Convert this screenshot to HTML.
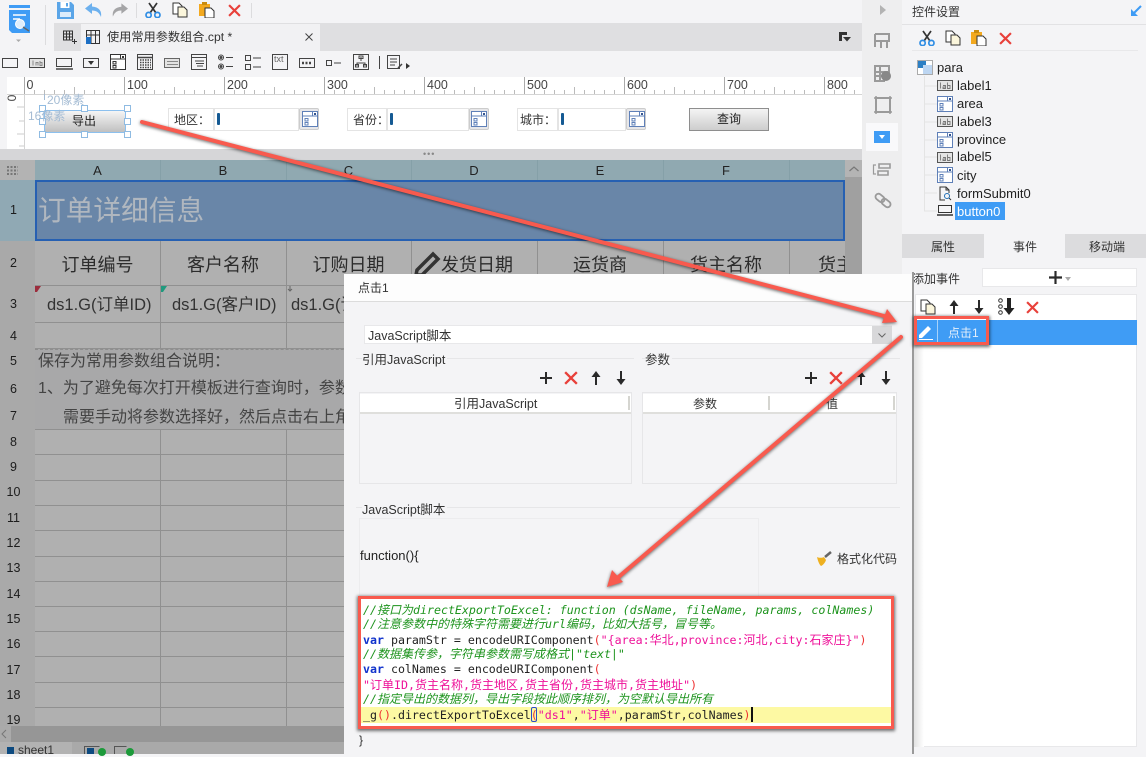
<!DOCTYPE html>
<html><head><meta charset="utf-8"><style>
html,body{margin:0;padding:0}
body{width:1146px;height:754px;position:relative;overflow:hidden;background:#f4f4f6;font-family:"Liberation Sans","Noto Sans CJK SC",sans-serif;color:#333}
.a{position:absolute}
.t{position:absolute;white-space:nowrap;line-height:1}
.h{background:#a9a9a9}
svg{position:absolute;overflow:visible}
.hl{position:absolute;left:35px;width:810px;height:1px;background:#909090}
.vl{position:absolute;top:241px;width:1px;height:485px;background:#909090}
.ch{position:absolute;top:160px;height:19px;line-height:21px;text-align:center;font-size:13px;color:#222}
.rh{position:absolute;left:0;width:27px;text-align:center;font-size:12.5px;color:#1c1c1c;line-height:1}
.r2{position:absolute;top:256px;font-size:18px;text-align:center;color:#2c2c2c;line-height:1;white-space:nowrap}
.sq{position:absolute;width:5px;height:5px;background:#fff;border:1px solid #8fbbe2}
.lb{position:absolute;background:#fff;border:1px solid #e4e4e4;font-size:12px;line-height:22px;color:#333;box-sizing:border-box;padding-left:5px;white-space:nowrap}
.in{position:absolute;background:#fff;border:1px solid #e4e4e4;box-sizing:border-box}
.in i{position:absolute;left:2px;top:4px;width:3px;height:12px;background:#155a93;border-radius:1px}
.cb{position:absolute;width:20px;height:22px;background:#e7e7e9;border:1px solid #ccc;border-radius:2px;box-sizing:border-box}
.tr{position:absolute;left:957px;font-size:13px;color:#222;line-height:1;white-space:nowrap}
.code{position:absolute;left:363px;font:11.62px/1 "DejaVu Sans Mono","Liberation Mono","Noto Sans CJK SC",monospace;white-space:pre;color:#222}
.code b{font-weight:inherit;font-size:12px}
.g{color:#1e941e;font-style:italic}.p{color:#ee1199}.k{color:#1133cc;font-weight:bold}.r{color:#ee3333}
.rl{position:absolute;top:79px;font-size:12.500px;color:#444;line-height:1}
.s16{position:absolute;white-space:nowrap;line-height:1;font-size:16px;color:#444}
</style></head><body>
<svg width="0" height="0" style="position:absolute"><defs>
<symbol id="cut" viewBox="0 0 16 16"><path d="M4 1l7 10M12 1L5 11" stroke="#333" stroke-width="1.700" fill="none"/><circle cx="3.600" cy="13" r="2.600" fill="none" stroke="#2f8de4" stroke-width="1.700"/><circle cx="12.400" cy="13" r="2.600" fill="none" stroke="#2f8de4" stroke-width="1.700"/></symbol>
<symbol id="copy" viewBox="0 0 16 16"><path d="M1 1h6l3 3v8H1z" fill="#fff" stroke="#333"/><path d="M6 5h6l3 3v7H6z" fill="#fbf6dc" stroke="#333"/></symbol>
<symbol id="paste" viewBox="0 0 16 16"><rect x="0" y="2" width="11" height="12" fill="#f3a91f"/><rect x="3" y="0" width="5" height="3" fill="#c98c10"/><path d="M6 6h6l3 3v7H6z" fill="#fff" stroke="#333"/></symbol>
<symbol id="x" viewBox="0 0 12 12"><path d="M1 1l10 10M11 1L1 11" stroke="#e8403a" stroke-width="2"/></symbol>
<symbol id="plus" viewBox="0 0 12 12"><path d="M6 0v12M0 6h12" stroke="#2a2a2a" stroke-width="2"/></symbol>
<symbol id="up" viewBox="0 0 10 14"><path d="M5 14V3" stroke="#2a2a2a" stroke-width="2"/><path d="M5 0l4.500 6h-9z" fill="#2a2a2a"/></symbol>
<symbol id="down" viewBox="0 0 10 14"><path d="M5 0v11" stroke="#2a2a2a" stroke-width="2"/><path d="M5 14l4.500-6h-9z" fill="#2a2a2a"/></symbol>
<symbol id="lab" viewBox="0 0 16 11"><rect x=".5" y=".5" width="15" height="10" fill="#e4e4e4" stroke="#555"/><path d="M3.500 2.500v6M6 5.500h2.500v3H6v-1.500h2.500M10.500 2.500v6h2.500v-3h-2.500" stroke="#777" fill="none" stroke-width=".9"/></symbol>
<symbol id="combo" viewBox="0 0 16 16"><rect x=".5" y=".5" width="15" height="15" fill="#fff" stroke="#5f80b8"/><path d="M1 5h14M10.500 1v4" stroke="#5f80b8"/><rect x="12" y="2" width="2" height="2" fill="#35558f"/><rect x="3" y="7.500" width="3" height="2.500" fill="none" stroke="#5f80b8"/><rect x="3" y="11.500" width="3" height="2.500" fill="none" stroke="#5f80b8"/></symbol>
<symbol id="cbk" viewBox="0 0 16 16"><rect x=".5" y=".5" width="15" height="15" fill="#fff" stroke="#333"/><path d="M1 5h14M10.500 1v4" stroke="#333"/><rect x="12" y="2" width="2" height="2" fill="#333"/><rect x="3" y="7.500" width="3" height="2.500" fill="none" stroke="#333"/><rect x="3" y="11.500" width="3" height="2.500" fill="none" stroke="#333"/></symbol>
</defs></svg>

<!-- top toolbar -->
<svg style="left:9px;top:5px" width="22" height="36" viewBox="0 0 22 36"><rect width="21" height="3" fill="#3f9cf5"/><path d="M0 5h21v23H3l-3-3z" fill="#3f9cf5"/><path d="M4 10h13M4 14h7" stroke="#fff" stroke-width="1.500"/><circle cx="11" cy="19" r="4.500" fill="#dfeefc" stroke="#fff"/><path d="M14 22l6 4" stroke="#666" stroke-width="1.500"/><path d="M7 34.500h5l-2.500 2.500z" fill="#aaa"/></svg>
<div class="a" style="left:45px;top:5px;width:1px;height:40px;background:#dcdcde"></div>
<svg style="left:57px;top:2px" width="17" height="17" viewBox="0 0 17 17"><path d="M0 0h14l3 3v14H0z" fill="#5aa5e8"/><rect x="3.500" y="0" width="9" height="6" fill="#fff"/><rect x="9" y="1" width="2" height="3.500" fill="#5aa5e8"/><rect x="3" y="10" width="11" height="5" fill="#dcecfb"/></svg>
<svg style="left:85px;top:3px" width="18" height="15" viewBox="0 0 18 15"><path d="M7 0L0 5.500 7 11V7.500c4 0 7 1.500 9 6.500 1-6-2-10-9-10.500z" fill="#6cb0ee"/></svg>
<svg style="left:111px;top:3px" width="17" height="15" viewBox="0 0 18 15"><path d="M11 0l7 5.500L11 11V7.500c-4 0-7 1.500-9 6.500C1 8 4 4 11 3.500z" fill="#a5a5a7"/></svg>
<div class="a" style="left:136px;top:3px;width:1px;height:15px;background:#dcdcde"></div>
<svg style="left:145px;top:2px" width="16" height="16"><use href="#cut"/></svg>
<svg style="left:172px;top:2px" width="16" height="16"><use href="#copy"/></svg>
<svg style="left:199px;top:2px" width="16" height="16"><use href="#paste"/></svg>
<svg style="left:228px;top:4px" width="13" height="13"><use href="#x"/></svg>
<div class="a" style="left:251px;top:3px;width:1px;height:15px;background:#dcdcde"></div>

<!-- tab bar -->
<div class="a" style="left:54px;top:23px;width:808px;height:28px;background:#dfdfe1"></div>
<div class="a" style="left:81px;top:24px;width:239px;height:27px;background:#f1f1f3"></div>
<svg style="left:63px;top:30px" width="14" height="14" viewBox="0 0 14 14"><path d="M.5 1h9v9h-9zM3.500 1v9M6.500 1v9M.5 4h9M.5 7h9M11.500 9v5M9 11.500h5" fill="none" stroke="#333" stroke-width="1"/></svg>
<svg style="left:86px;top:30px" width="14" height="14" viewBox="0 0 14 14"><path d="M.5.500h13v13H.5zM.5 5h13M5 .5v13M9.500.5v13" fill="none" stroke="#333"/><rect x="0" y="7" width="5" height="7" fill="#1c6fc4"/></svg>
<div class="t" style="left:107px;top:31px;font-size:12.200px;color:#333">使用常用参数组合.cpt *</div>
<svg style="left:305px;top:33px" width="8" height="8"><path d="M.5.500l7 7M7.500.500l-7 7" stroke="#444"/></svg>
<svg style="left:839px;top:32px" width="12" height="10"><path d="M0 0h8v3H3v6H0z" fill="#333"/><path d="M4 5h8L8 9.500z" fill="#333"/></svg>

<!-- widget toolbar -->
<svg style="left:0;top:51px" width="420" height="26" viewBox="0 0 420 26" fill="none" stroke="#444">
<rect x="2.500" y="7.500" width="15" height="9"/>
<rect x="29.500" y="7.500" width="15" height="9" fill="#e3e3e3"/><path d="M33 9.500v5M36 14.500v-3h2v3M40 10v4.500h2v-3h-2" stroke="#888"/>
<rect x="56.500" y="7.500" width="15" height="8"/><path d="M56 18h17" stroke-width="1.500"/>
<rect x="83.500" y="7.500" width="15" height="9"/><path d="M88 10h6l-3 4z" fill="#333" stroke="none"/>
<rect x="137.500" y="3.500" width="15" height="15"/><path d="M138 6.500h15" stroke-width="1.500"/><path d="M140 9h11M140 11.500h11M140 14h11M140 16.500h11" stroke-dasharray="1.500 1" stroke-width="1.500"/>
<rect x="164.500" y="7.500" width="15" height="9" fill="#e3e3e3" stroke="#666"/><path d="M167 10.500h11M167 13.500h11" stroke="#888"/>
<rect x="191.500" y="3.500" width="15" height="15"/><path d="M192 6.500h15M195 10h9M196 12.500h8M197 15h6"/>
<circle cx="221" cy="6.500" r="2.500"/><circle cx="221" cy="15.500" r="2.500"/><circle cx="221" cy="6.500" r="1" fill="#444"/><circle cx="221" cy="15.500" r="1" fill="#444"/><path d="M226 6.500h7M226 15.500h7"/>
<rect x="245.500" y="4.500" width="5" height="5"/><rect x="245.500" y="13.500" width="5" height="5"/><path d="M253 7h8M253 16h8"/>
<rect x="272.500" y="3.500" width="15" height="15"/>
<rect x="299.500" y="7.500" width="15" height="9"/><path d="M302 12h10" stroke-dasharray="2 1.500" stroke-width="2.500"/>
<rect x="326.500" y="9.500" width="5" height="5"/><path d="M334 12h7"/>
<rect x="353.500" y="3.500" width="15" height="15"/><path d="M361 6v4M357 15v-3h8v3"/><rect x="359" y="5" width="4" height="2.500"/><rect x="355.500" y="13.500" width="3" height="2.500"/><rect x="363.500" y="13.500" width="3" height="2.500"/>
<path d="M379.500 5v13"/>
<rect x="387.500" y="4.500" width="12" height="13"/><path d="M390 8h7M390 11h7M390 14h5"/><path d="M398 17l4-4" stroke-width="1.500"/>
<path d="M406 12l4 3-4 3z" fill="#333" stroke="none"/>
</svg>
<svg style="left:110px;top:54px" width="16" height="16"><use href="#cbk"/></svg>
<div class="t" style="left:274px;top:55px;font-size:9px;color:#666">txt</div>

<!-- ruler -->
<div class="a" style="left:0;top:77px;width:862px;height:17px;background:#fff;border-bottom:1px solid #d4d4d4;box-sizing:content-box"></div>
<div class="a" style="left:0;top:77px;width:7px;height:73px;background:#f4f4f6"></div>
<svg style="left:24px;top:77px" width="838" height="18" viewBox="0 0 838 18" fill="none" stroke="#bbb">
<path d="M.5 0v17M100.500 0v17M200.500 0v17M300.500 0v17M400.500 0v17M500.500 0v17M600.500 0v17M700.500 0v17M800.500 0v17" stroke="#aaa"/>
<path d="M50.500 10v7M150.500 10v7M250.500 10v7M350.500 10v7M450.500 10v7M550.500 10v7M650.500 10v7M750.500 10v7"/>
<path d="M10.500 13v4M20.500 13v4M30.500 13v4M40.500 13v4M60.500 13v4M70.500 13v4M80.500 13v4M90.500 13v4M110.500 13v4M120.500 13v4M130.500 13v4M140.500 13v4M160.500 13v4M170.500 13v4M180.500 13v4M190.500 13v4M210.500 13v4M220.500 13v4M230.500 13v4M240.500 13v4M260.500 13v4M270.500 13v4M280.500 13v4M290.500 13v4M310.500 13v4M320.500 13v4M330.500 13v4M340.500 13v4M360.500 13v4M370.500 13v4M380.500 13v4M390.500 13v4M410.500 13v4M420.500 13v4M430.500 13v4M440.500 13v4M460.500 13v4M470.500 13v4M480.500 13v4M490.500 13v4M510.500 13v4M520.500 13v4M530.500 13v4M540.500 13v4M560.500 13v4M570.500 13v4M580.500 13v4M590.500 13v4M610.500 13v4M620.500 13v4M630.500 13v4M640.500 13v4M660.500 13v4M670.500 13v4M680.500 13v4M690.500 13v4M710.500 13v4M720.500 13v4M730.500 13v4M740.500 13v4M760.500 13v4M770.500 13v4M780.500 13v4M790.500 13v4M810.500 13v4M820.500 13v4M830.500 13v4"/>
</svg>
<div class="rl" style="left:26.500px">0</div><div class="rl" style="left:127px">100</div><div class="rl" style="left:227px">200</div><div class="rl" style="left:327px">300</div><div class="rl" style="left:427px">400</div><div class="rl" style="left:527px">500</div><div class="rl" style="left:627px">600</div><div class="rl" style="left:727px">700</div><div class="rl" style="left:827px">800</div>

<!-- param area -->
<div class="a" style="left:7px;top:95px;width:855px;height:54px;background:#fff"></div>
<div class="a" style="left:24px;top:94px;width:1px;height:55px;background:#d4d4d4"></div>
<svg style="left:7px;top:94px" width="17" height="55" fill="none" stroke="#ccc"><path d="M10 13h7M12 27h5M10 40h7M12 52h5"/></svg>
<div class="t" style="left:6px;top:92px;font-size:12px;color:#444;transform:rotate(-90deg);width:12px;text-align:center">0</div>
<div class="a" style="left:0;top:149px;width:862px;height:11px;background:#d6d6d8"></div>
<div class="t" style="left:423px;top:150px;font-size:9px;color:#888;letter-spacing:1px">•••</div>

<div class="a" style="left:44px;top:110px;width:80px;height:21px;background:linear-gradient(#f5f5f5,#c0c0c0);border:1px solid #8cc0ee"></div>
<div class="t" style="left:72px;top:115px;font-size:12px;color:#222">导出</div>
<div class="sq" style="left:39px;top:105px"></div><div class="sq" style="left:81px;top:105px"></div><div class="sq" style="left:124px;top:105px"></div>
<div class="sq" style="left:39px;top:118px"></div><div class="sq" style="left:124px;top:118px"></div>
<div class="sq" style="left:39px;top:131px"></div><div class="sq" style="left:81px;top:131px"></div><div class="sq" style="left:124px;top:131px"></div>
<div class="t" style="left:47px;top:94px;font-size:12px;color:#a5bcd4">20像素</div>
<div class="t" style="left:28px;top:110px;font-size:12px;color:#a5bcd4">16像素</div>
<div class="a" style="left:44px;top:94px;width:1px;height:6px;background:#a5bcd4"></div>

<div class="lb" style="left:168px;top:108px;width:46px;height:23px">地区：</div>
<div class="in" style="left:214px;top:108px;width:85px;height:23px"><i></i></div>
<div class="cb" style="left:299px;top:108px"></div><svg style="left:302px;top:111px" width="16" height="16"><use href="#combo"/></svg>
<div class="lb" style="left:347px;top:108px;width:40px;height:23px">省份：</div>
<div class="in" style="left:387px;top:108px;width:82px;height:23px"><i></i></div>
<div class="cb" style="left:469px;top:108px"></div><svg style="left:471px;top:111px" width="16" height="16"><use href="#combo"/></svg>
<div class="lb" style="left:517px;top:108px;width:41px;height:23px;padding-left:2px">城市：</div>
<div class="in" style="left:558px;top:108px;width:68px;height:23px"><i></i></div>
<div class="cb" style="left:626px;top:108px"></div><svg style="left:629px;top:111px" width="16" height="16"><use href="#combo"/></svg>
<div class="a" style="left:689px;top:108px;width:80px;height:23px;box-sizing:border-box;background:linear-gradient(#f4f4f4,#cdcdcd);border:1px solid #8e8e8e"></div>
<div class="t" style="left:717px;top:113px;font-size:12px;color:#222">查询</div>

<!-- sheet -->
<div class="a" style="left:0;top:160px;width:845px;height:566px;background:#b0b0b0"></div>
<div class="a" style="left:0;top:160px;width:35px;height:20px;background:#b3b3b3"></div>
<svg style="left:7px;top:166px" width="12" height="10"><path d="M0 1h11M0 4.500h11M0 8h11" stroke="#777" stroke-width="2" stroke-dasharray="2 1.500"/></svg>
<div class="a" style="left:35px;top:160px;width:810px;height:20px;background:#90a9b1"></div>
<div class="a" style="left:0;top:180px;width:35px;height:61px;background:#90a9b4"></div>
<div class="a h" style="left:0;top:241px;width:35px;height:485px"></div>
<div class="ch" style="left:35px;width:125px">A</div><div class="ch" style="left:160px;width:126px">B</div><div class="ch" style="left:286px;width:125px">C</div><div class="ch" style="left:411px;width:126px">D</div><div class="ch" style="left:537px;width:126px">E</div><div class="ch" style="left:663px;width:126px">F</div>
<div class="a" style="left:160px;top:160px;width:1px;height:20px;background:#85a0a8"></div><div class="a" style="left:286px;top:160px;width:1px;height:20px;background:#85a0a8"></div><div class="a" style="left:411px;top:160px;width:1px;height:20px;background:#85a0a8"></div><div class="a" style="left:537px;top:160px;width:1px;height:20px;background:#85a0a8"></div><div class="a" style="left:663px;top:160px;width:1px;height:20px;background:#85a0a8"></div><div class="a" style="left:789px;top:160px;width:1px;height:20px;background:#85a0a8"></div>
<!-- grid -->
<div class="vl" style="left:160px"></div><div class="vl" style="left:286px"></div><div class="vl" style="left:411px"></div><div class="vl" style="left:537px"></div><div class="vl" style="left:663px"></div><div class="vl" style="left:789px"></div>
<div class="hl" style="top:285px"></div><div class="hl" style="top:322px"></div><div class="hl" style="top:348px"></div><div class="hl" style="top:429px"></div><div class="hl" style="top:454px"></div><div class="hl" style="top:480px"></div><div class="hl" style="top:505px"></div><div class="hl" style="top:530px"></div><div class="hl" style="top:556px"></div><div class="hl" style="top:581px"></div><div class="hl" style="top:606px"></div><div class="hl" style="top:631px"></div><div class="hl" style="top:656px"></div><div class="hl" style="top:682px"></div><div class="hl" style="top:707px"></div>
<div class="a" style="left:35px;top:349px;width:810px;height:80px;background:#a8a8a9;border-top:1px dashed #8e8e8e;box-sizing:border-box"></div>
<div class="a" style="left:35px;top:180px;width:810px;height:61px;background:#6986a8;border:2px solid #2660b2;box-sizing:border-box"></div>
<div class="t" style="left:38px;top:197px;font-size:27.700px;color:#b0b7bf">订单详细信息</div>
<div class="r2" style="left:35px;width:125px">订单编号</div>
<div class="r2" style="left:160px;width:126px">客户名称</div>
<div class="r2" style="left:286px;width:125px">订购日期</div>
<div class="r2" style="left:441px">发货日期</div>
<div class="r2" style="left:537px;width:126px">运货商</div>
<div class="r2" style="left:663px;width:126px">货主名称</div>
<div class="a" style="left:790px;top:241px;width:55px;height:44px;overflow:hidden"><div class="r2" style="left:28px;top:15px">货主</div></div>
<svg style="left:414px;top:250px" width="28" height="26" viewBox="0 0 28 26"><path d="M3 20L19 4l5 5L8 25H2z" fill="none" stroke="#333" stroke-width="3.500"/></svg>
<div class="t" style="left:47px;top:297px;font-size:16.500px;color:#333">ds1.G(订单ID)</div>
<div class="t" style="left:172px;top:297px;font-size:16.500px;color:#333">ds1.G(客户ID)</div>
<div class="t" style="left:291px;top:297px;font-size:16.500px;color:#333">ds1.G(订购日期)</div>
<svg style="left:35px;top:286px" width="7" height="6"><path d="M0 0h6L2 6H0z" fill="#9c2d3d"/></svg>
<svg style="left:161px;top:286px" width="7" height="6"><path d="M0 0h6L2 6H0z" fill="#1f9a7e"/></svg>
<svg style="left:287px;top:286px" width="6" height="6"><path d="M3 0v5M1 3l2 2 2-2" stroke="#666" fill="none"/></svg>
<div class="s16" style="left:38px;top:354px">保存为常用参数组合说明：</div>
<div class="s16" style="left:38px;top:381px">1、为了避免每次打开模板进行查询时，参数组合</div>
<div class="s16" style="left:63px;top:410px">需要手动将参数选择好，然后点击右上角保存</div>
<div class="rh" style="top:204px">1</div><div class="rh" style="top:257px">2</div><div class="rh" style="top:298px">3</div><div class="rh" style="top:330px">4</div><div class="rh" style="top:355px">5</div><div class="rh" style="top:383px">6</div><div class="rh" style="top:410px">7</div><div class="rh" style="top:436px">8</div><div class="rh" style="top:461px">9</div><div class="rh" style="top:486px">10</div><div class="rh" style="top:512px">11</div><div class="rh" style="top:537px">12</div><div class="rh" style="top:562px">13</div><div class="rh" style="top:588px">14</div><div class="rh" style="top:613px">15</div><div class="rh" style="top:638px">16</div><div class="rh" style="top:664px">17</div><div class="rh" style="top:689px">18</div><div class="rh" style="top:714px">19</div>
<!-- scrollbar -->
<div class="a" style="left:845px;top:160px;width:17px;height:566px;background:#a0a0a0"></div>
<div class="a" style="left:845px;top:160px;width:17px;height:17px;background:#b4b4b4"></div>
<svg style="left:849px;top:166px" width="10" height="6"><path d="M.5 5l4.500-4 4.500 4" stroke="#777" fill="none" stroke-width="1.200"/></svg>
<div class="a" style="left:0;top:726px;width:862px;height:16px;background:#969696"></div>
<div class="a" style="left:0;top:726px;width:11px;height:16px;background:#aaa"></div>
<svg style="left:1px;top:729px" width="6" height="10"><path d="M5 1L1 5l4 4" stroke="#777" fill="none"/></svg>
<div class="a" style="left:0;top:742px;width:862px;height:12px;background:#a9a9a9"></div>
<div class="a" style="left:0;top:742px;width:72px;height:12px;background:#b2b2b2"></div>
<div class="a" style="left:7px;top:747px;width:7px;height:7px;background:#0d4a80"></div>
<div class="t" style="left:18px;top:744px;font-size:12px;color:#333">sheet1</div>
<svg style="left:84px;top:746px" width="50" height="8"><path d="M.5 8V.5h15" stroke="#555" fill="none"/><rect x="3" y="2" width="7" height="6" fill="#0d4a80"/><circle cx="18" cy="6" r="4" fill="#1c9a3a"/><path d="M30.500 8V.5h12" stroke="#555" fill="none"/><circle cx="46" cy="6" r="4" fill="#1c9a3a"/></svg>

<!-- right strip -->
<div class="a" style="left:862px;top:0;width:40px;height:754px;background:#eeeeef"></div>
<svg style="left:862px;top:0" width="40" height="215" fill="none" stroke="#9a9a9a" stroke-width="2">
<path d="M18 5l6 5-6 5z" fill="#b3b3b3" stroke="none"/>
<path d="M13 34h15M13 34v13M13 41h15M19 41v7M25 41v7M27 34v7"/>
<path d="M13 66h14v6h-5v9h-9zM13 72h9M13 76h8M18 66v15"/><circle cx="24" cy="76" r="5" fill="#888" stroke="none"/>
<rect x="14" y="98" width="14" height="14"/><path d="M12 98h4M26 98h4M12 112h4M26 112h4M14 96v4M28 96v4M14 110v4M28 110v4" stroke-width="1.500"/>
<path d="M17 164h11v4H17zM16 171h10v4H16z" stroke-width="1.600"/><path d="M14 165h-2.500v9H14" stroke-width="1.200"/>
<rect x="13" y="195" width="10" height="6" rx="3" transform="rotate(40 18 198)" stroke-width="1.800"/><rect x="19" y="200" width="10" height="6" rx="3" transform="rotate(40 24 203)" stroke-width="1.800"/>
</svg>
<div class="a" style="left:866px;top:123px;width:32px;height:28px;background:#f9f9fb"></div>
<div class="a" style="left:874px;top:131px;width:16px;height:12px;background:#3f9cf5"></div>
<svg style="left:879px;top:135px" width="6" height="4"><path d="M0 0h6L3 4z" fill="#fff"/></svg>

<!-- right panel -->
<div class="a" style="left:902px;top:0;width:244px;height:754px;background:#f4f4f6"></div>
<div class="t" style="left:912px;top:6px;font-size:12px;color:#333">控件设置</div>
<svg style="left:1130px;top:5px" width="12" height="12"><path d="M11 1L3 9" stroke="#3f9cf5" stroke-width="2"/><path d="M1 4v7h7z" fill="#3f9cf5"/></svg>
<div class="a" style="left:902px;top:24px;width:244px;height:1px;background:#e2e2e4"></div>
<svg style="left:919px;top:30px" width="16" height="16"><use href="#cut"/></svg>
<svg style="left:945px;top:30px" width="16" height="16"><use href="#copy"/></svg>
<svg style="left:971px;top:30px" width="16" height="16"><use href="#paste"/></svg>
<svg style="left:999px;top:32px" width="13" height="13"><use href="#x"/></svg>
<div class="a" style="left:912px;top:50px;width:226px;height:1px;background:#e8e8ea"></div>
<svg style="left:917px;top:60px" width="16" height="15" viewBox="0 0 16 15"><rect x=".5" y=".5" width="15" height="14" fill="#fff" stroke="#aaa"/><rect x="1" y="1" width="8" height="7" fill="#2c7fc4"/><rect x="6" y="5" width="9" height="9" fill="#bdd6f2"/></svg>
<svg style="left:924px;top:76px" width="14" height="135" fill="none" stroke="#e4e4e4"><path d="M.5 0v135M0 10h13M0 28h13M0 46h13M0 64h13M0 81h13M0 99h13M0 117h13M0 135h13"/></svg>
<div class="tr" style="left:937px;top:61px">para</div>
<svg style="left:937px;top:80px" width="16" height="11"><use href="#lab"/></svg><div class="tr" style="top:79px">label1</div>
<svg style="left:937px;top:96px" width="16" height="16"><use href="#combo"/></svg><div class="tr" style="top:97px">area</div>
<svg style="left:937px;top:116px" width="16" height="11"><use href="#lab"/></svg><div class="tr" style="top:115px">label3</div>
<svg style="left:937px;top:132px" width="16" height="16"><use href="#combo"/></svg><div class="tr" style="top:133px">province</div>
<svg style="left:937px;top:152px" width="16" height="11"><use href="#lab"/></svg><div class="tr" style="top:150px">label5</div>
<svg style="left:937px;top:167px" width="16" height="16"><use href="#combo"/></svg><div class="tr" style="top:169px">city</div>
<svg style="left:939px;top:186px" width="13" height="15" viewBox="0 0 13 15" fill="none" stroke="#333"><path d="M6 14H1V1h6l3 3v3M7 1v3h3"/><circle cx="8" cy="10" r="2.500" stroke="#1f6fb5"/><path d="M10 12l2 2"/></svg><div class="tr" style="top:187px">formSubmit0</div>
<svg style="left:937px;top:205px" width="16" height="11" fill="none" stroke="#333"><rect x="1.500" y=".5" width="13" height="7"/><path d="M0 10h16" stroke-width="1.500"/></svg>
<div class="a" style="left:955px;top:202px;width:50px;height:18px;background:#3f9cf5"></div><div class="tr" style="top:205px;color:#fff">button0</div>

<div class="a" style="left:902px;top:234px;width:82px;height:24px;background:#dcdcde"></div>
<div class="a" style="left:1065px;top:234px;width:81px;height:24px;background:#dcdcde"></div>
<div class="t" style="left:931px;top:241px;font-size:12px;color:#333">属性</div>
<div class="t" style="left:1013px;top:241px;font-size:12px;color:#333">事件</div>
<div class="t" style="left:1089px;top:241px;font-size:12px;color:#333">移动端</div>
<div class="t" style="left:912px;top:273px;font-size:12px;color:#333">添加事件</div>
<div class="a" style="left:982px;top:268px;width:155px;height:19px;background:#fff;border:1px solid #e8e8ea;box-sizing:border-box"></div>
<svg style="left:1049px;top:271px" width="13" height="13"><use href="#plus"/></svg>
<svg style="left:1065px;top:277px" width="6" height="4"><path d="M0 0h6L3 4z" fill="#aaa"/></svg>
<div class="a" style="left:915px;top:294px;width:222px;height:453px;background:#fff;border:1px solid #e8e8ea;box-sizing:border-box"></div>
<svg style="left:920px;top:299px" width="16" height="16"><use href="#copy"/></svg>
<svg style="left:949px;top:300px" width="10" height="14"><use href="#up"/></svg>
<svg style="left:974px;top:300px" width="10" height="14"><use href="#down"/></svg>
<svg style="left:998px;top:298px" width="16" height="18"><circle cx="2.500" cy="2.500" r="1.800" fill="none" stroke="#333"/><circle cx="2.500" cy="8.500" r="1.800" fill="none" stroke="#333"/><circle cx="2.500" cy="14.500" r="1.800" fill="none" stroke="#333"/><path d="M11 0v11" stroke="#222" stroke-width="4"/><path d="M5.500 10h11L11 17z" fill="#222"/></svg>
<svg style="left:1026px;top:301px" width="13" height="13"><use href="#x"/></svg>
<div class="a" style="left:915px;top:320px;width:222px;height:25px;background:#3f9cf5"></div>
<svg style="left:918px;top:324px" width="15" height="16"><path d="M1 11L10 2l3 3-9 9H1z" fill="#fff"/><path d="M1 15.500h14" stroke="#fff"/></svg>
<div class="a" style="left:937px;top:320px;width:1px;height:25px;background:#a8d2fa"></div>
<div class="t" style="left:948px;top:327px;font-size:12px;color:#e4effb">点击1</div>
<div class="a" style="left:912px;top:272px;width:2px;height:482px;background:#9a9a9a"></div>
<div class="a" style="left:914px;top:345px;width:10px;height:402px;background:linear-gradient(90deg,#e2e2e2,#fff)"></div>

<!-- modal -->
<div class="a" style="left:344px;top:274px;width:568px;height:480px;background:#f4f4f6"></div>
<div class="a" style="left:344px;top:274px;width:568px;height:27px;background:#fdfdfd;border-bottom:1px solid #dcdcdc"></div>
<div class="t" style="left:358px;top:282px;font-size:12px;color:#333">点击1</div>
<div class="a" style="left:364px;top:325px;width:528px;height:19px;background:#fff;border:1px solid #e8e8ea;box-sizing:border-box"></div>
<div class="a" style="left:872px;top:326px;width:20px;height:18px;background:#d8d8da"></div>
<svg style="left:878px;top:333px" width="8" height="5"><path d="M.5.500L4 4l3.500-3.500" stroke="#666" fill="none"/></svg>
<div class="t" style="left:368px;top:330px;font-size:12.500px;color:#333">JavaScript脚本</div>
<div class="a" style="left:356px;top:358px;width:278px;height:1px;background:#e6e6e8"></div>
<div class="a" style="left:642px;top:358px;width:258px;height:1px;background:#e6e6e8"></div>
<div class="t" style="left:362px;top:354px;font-size:12.500px;color:#333;background:#f4f4f6;padding-right:2px">引用JavaScript</div>
<div class="t" style="left:645px;top:354px;font-size:12.500px;color:#333;background:#f4f4f6;padding-right:2px">参数</div>
<svg style="left:540px;top:372px" width="12" height="12"><use href="#plus"/></svg>
<svg style="left:564px;top:371px" width="14" height="14"><use href="#x"/></svg>
<svg style="left:591px;top:371px" width="10" height="14"><use href="#up"/></svg>
<svg style="left:616px;top:371px" width="10" height="14"><use href="#down"/></svg>
<svg style="left:805px;top:372px" width="12" height="12"><use href="#plus"/></svg>
<svg style="left:829px;top:371px" width="14" height="14"><use href="#x"/></svg>
<svg style="left:856px;top:371px" width="10" height="14"><use href="#up"/></svg>
<svg style="left:881px;top:371px" width="10" height="14"><use href="#down"/></svg>
<div class="a" style="left:359px;top:392px;width:273px;height:92px;box-sizing:border-box;border:1px solid #e6e6e8"></div>
<div class="a" style="left:642px;top:392px;width:255px;height:92px;box-sizing:border-box;border:1px solid #e6e6e8"></div>
<div class="a" style="left:360px;top:394px;width:271px;height:18px;background:#fff;border-bottom:2px solid #dfdfdc"></div>
<div class="a" style="left:643px;top:394px;width:253px;height:18px;background:#fff;border-bottom:2px solid #dfdfdc"></div>
<div class="a" style="left:628px;top:396px;width:2px;height:14px;background:#d5d5d0"></div>
<div class="a" style="left:768px;top:396px;width:2px;height:14px;background:#d5d5d0"></div>
<div class="a" style="left:893px;top:396px;width:2px;height:14px;background:#d5d5d0"></div>
<div class="t" style="left:454px;top:398px;font-size:12.500px;color:#333">引用JavaScript</div>
<div class="t" style="left:693px;top:398px;font-size:12px;color:#333">参数</div>
<div class="t" style="left:826px;top:398px;font-size:12px;color:#333">值</div>
<div class="a" style="left:356px;top:507px;width:544px;height:1px;background:#e6e6e8"></div>
<div class="t" style="left:362px;top:504px;font-size:12.500px;color:#333;background:#f4f4f6;padding-right:2px">JavaScript脚本</div>
<div class="a" style="left:359px;top:518px;width:400px;height:90px;box-sizing:border-box;border:1px solid #ececee"></div>
<div class="t" style="left:360px;top:549px;font-size:13px;color:#222">function(){</div>
<svg style="left:817px;top:551px" width="16" height="15" viewBox="0 0 16 15"><path d="M0 6c2 1 5 1 7 0l2 3c-1 3-3 5-5 6C2 13 1 10 0 6z" fill="#eeb020"/><path d="M8 6l6-5" stroke="#666" stroke-width="2.500"/></svg>
<div class="t" style="left:837px;top:553px;font-size:12px;color:#333">格式化代码</div>
<div class="t" style="left:359px;top:734px;font-size:12px;color:#333">}</div>

<!-- code -->
<div class="a" style="left:358px;top:596px;width:536px;height:133px;box-sizing:border-box;background:#fff;border:3px solid #f85a4e;box-shadow:0 1px 3px 1px rgba(0,0,0,.55)"></div>
<div class="a" style="left:361px;top:707px;width:530px;height:16px;background:#fdf9a3"></div>
<div class="a" style="left:531px;top:707px;width:6px;height:15px;box-sizing:border-box;border:1px solid #2a4cc8;border-radius:2px"></div>
<div class="a" style="left:751px;top:707px;width:1.500px;height:15px;background:#111"></div>
<div class="code g" style="top:604px">//<b>接口为</b>directExportToExcel: function (dsName, fileName, params, colNames)</div>
<div class="code g" style="top:618px">//<b>注意参数中的特殊字符需要进行</b>url<b>编码，比如大括号，冒号等。</b></div>
<div class="code" style="top:634px"><span class="k">var</span> paramStr = encodeURIComponent<span class="r">(</span><span class="p">"{area:<b>华北</b>,province:<b>河北</b>,city:<b>石家庄</b>}"</span><span class="r">)</span></div>
<div class="code g" style="top:648px">//<b>数据集传参，字符串参数需写成格式</b>|"text|"</div>
<div class="code" style="top:664px"><span class="k">var</span> colNames = encodeURIComponent<span class="r">(</span></div>
<div class="code p" style="top:679px">"<b>订单</b>ID,<b>货主名称</b>,<b>货主地区</b>,<b>货主省份</b>,<b>货主城市</b>,<b>货主地址</b>"<span class="r">)</span></div>
<div class="code g" style="top:693px">//<b>指定导出的数据列，导出字段按此顺序排列，为空默认导出所有</b></div>
<div class="code" style="top:709px">_g<span class="r">()</span>.directExportToExcel<span class="r">(</span><span class="p">"ds1"</span>,<span class="p">"<b>订单</b>"</span>,paramStr,colNames<span class="r">)</span></div>

<!-- red box + arrows -->
<div class="a" style="left:914px;top:316px;width:75px;height:29px;box-sizing:border-box;border:3px solid #f85a4e;box-shadow:0 1px 3px 1px rgba(0,0,0,.55)"></div>
<svg style="left:0;top:0;filter:drop-shadow(0 1px 1.500px rgba(0,0,0,.6))" width="1146" height="754">
<path d="M142 122L888 317" stroke="#f85a4e" stroke-width="4" stroke-linecap="round"/>
<path d="M897 322L887 309 882 323z" fill="#f85a4e"/>
<path d="M901 337L615 580" stroke="#f85a4e" stroke-width="4" stroke-linecap="round"/>
<path d="M607 587L612 570 623 582z" fill="#f85a4e"/>
</svg>
</body></html>
